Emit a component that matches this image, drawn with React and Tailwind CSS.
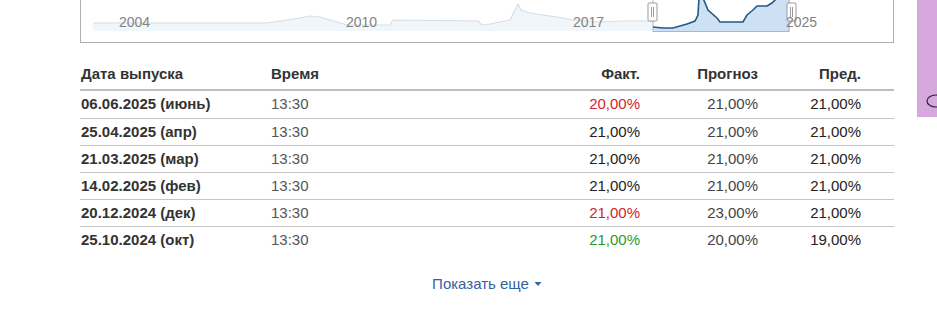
import React from 'react';

const rows = [
  { date: '06.06.2025 (июнь)', time: '13:30', fact: '20,00%', factColor: 'text-[#d0262b]', forecast: '21,00%', prev: '21,00%' },
  { date: '25.04.2025 (апр)', time: '13:30', fact: '21,00%', factColor: 'text-[#222]', forecast: '21,00%', prev: '21,00%' },
  { date: '21.03.2025 (мар)', time: '13:30', fact: '21,00%', factColor: 'text-[#222]', forecast: '21,00%', prev: '21,00%' },
  { date: '14.02.2025 (фев)', time: '13:30', fact: '21,00%', factColor: 'text-[#222]', forecast: '21,00%', prev: '21,00%' },
  { date: '20.12.2024 (дек)', time: '13:30', fact: '21,00%', factColor: 'text-[#d0262b]', forecast: '23,00%', prev: '21,00%' },
  { date: '25.10.2024 (окт)', time: '13:30', fact: '21,00%', factColor: 'text-[#2b9a2b]', forecast: '20,00%', prev: '19,00%' },
];

const cols = 'grid grid-cols-[190px_251px_118px_118px_103px] pl-[1px] pr-[33px] items-center';

function Handle({ x }) {
  return (
    <g>
      <rect x={x} y="3" width="9" height="18" rx="1" fill="#fff" stroke="#9a9a9a" strokeWidth="1" />
      <line x1={x + 3.5} y1="7" x2={x + 3.5} y2="17" stroke="#9a9a9a" strokeWidth="1" />
      <line x1={x + 5.5} y1="7" x2={x + 5.5} y2="17" stroke="#9a9a9a" strokeWidth="1" />
    </g>
  );
}

function Navigator() {
  const bg = 'M93,23 L267,23 L300,18 L310,16 L320,17 L347,25 L390,25 L393,20 L478,21 L482,25 L490,24 L510,20 L515,10 L518,4 L521,10 L530,13 L563,18 L573,20 L600,22 L620,21 L653,21';
  const sel = 'M653,27 L663,28 L673,28 L687,24 L695,21 L698,15 L699,-2 L703,-2 L708,10 L717,18 L720,22 L743,22 L747,15 L753,10 L757,6 L767,6 L772,3 L777,-2';
  return (
    <svg className="absolute inset-0" width="812" height="42" viewBox="81 0 812 42">
      <path d={`${bg} L653,31 L93,31 Z`} fill="#f1f6fb" />
      <path d={bg} fill="none" stroke="#d3dee8" strokeWidth="1.2" />
      <path d={`${sel} L790,-2 L790,31 L653,31 Z`} fill="#cde0f4" />
      <rect x="653" y="-2" width="136" height="33.5" fill="none" stroke="#aab8c6" strokeWidth="1" />
      <path d={sel} fill="none" stroke="#1f5a86" strokeWidth="1.6" />
      <g fill="#828282" fontSize="14" fontFamily="'Liberation Sans', Arial, sans-serif">
        <text x="119" y="27">2004</text>
        <text x="346" y="27">2010</text>
        <text x="573" y="27">2017</text>
      </g>
      <Handle x={648} />
      <Handle x={787} />
      <text x="786" y="27" fill="#828282" fontSize="14" fontFamily="'Liberation Sans', Arial, sans-serif">2025</text>
    </svg>
  );
}

export default function App() {
  return (
    <div className="relative w-[937px] h-[329px] bg-white overflow-hidden font-['Liberation_Sans',Arial,sans-serif] text-[15px]">
      <div className="ml-[80px] w-[814px]">
        {/* chart navigator box */}
        <div className="relative h-[43px] border-x border-b border-[#b0b0b0]">
          <Navigator />
        </div>

        {/* table */}
        <div className="mt-[17px]">
          <div className={`${cols} h-[31px] border-b-2 border-[#bdbdbd] font-bold text-[#333]`}>
            <div>Дата выпуска</div>
            <div>Время</div>
            <div className="text-right">Факт.</div>
            <div className="text-right">Прогноз</div>
            <div className="text-right">Пред.</div>
          </div>
          {rows.map((r, i) => (
            <div
              key={r.date}
              className={`${cols} ${i === 0 ? 'h-[28px]' : 'h-[27px]'} ${i < rows.length - 1 ? 'border-b border-[#c4c4c4]' : ''}`}
            >
              <div className="font-bold text-[#333]">{r.date}</div>
              <div className="text-[#555]">{r.time}</div>
              <div className={`text-right ${r.factColor}`}>{r.fact}</div>
              <div className="text-right text-[#444]">{r.forecast}</div>
              <div className="text-right text-[#222]">{r.prev}</div>
            </div>
          ))}
        </div>

        <div className="mt-[19px] flex justify-center">
          <button className="flex items-center gap-[5px] text-[#3462a0]">
            Показать еще
            <svg width="8" height="6" viewBox="0 0 8 6">
              <path d="M0.5,1 L7.5,1 L4,5 Z" fill="#3462a0" />
            </svg>
          </button>
        </div>
      </div>

      {/* side widget */}
      <div className="absolute top-0 right-0 w-[20px] h-[117px] bg-[#d6a8dd] overflow-hidden">
        <svg width="20" height="117" viewBox="0 0 20 117">
          <ellipse cx="19" cy="101" rx="9" ry="6" fill="none" stroke="#2a2333" strokeWidth="1.2" />
        </svg>
      </div>
    </div>
  );
}
